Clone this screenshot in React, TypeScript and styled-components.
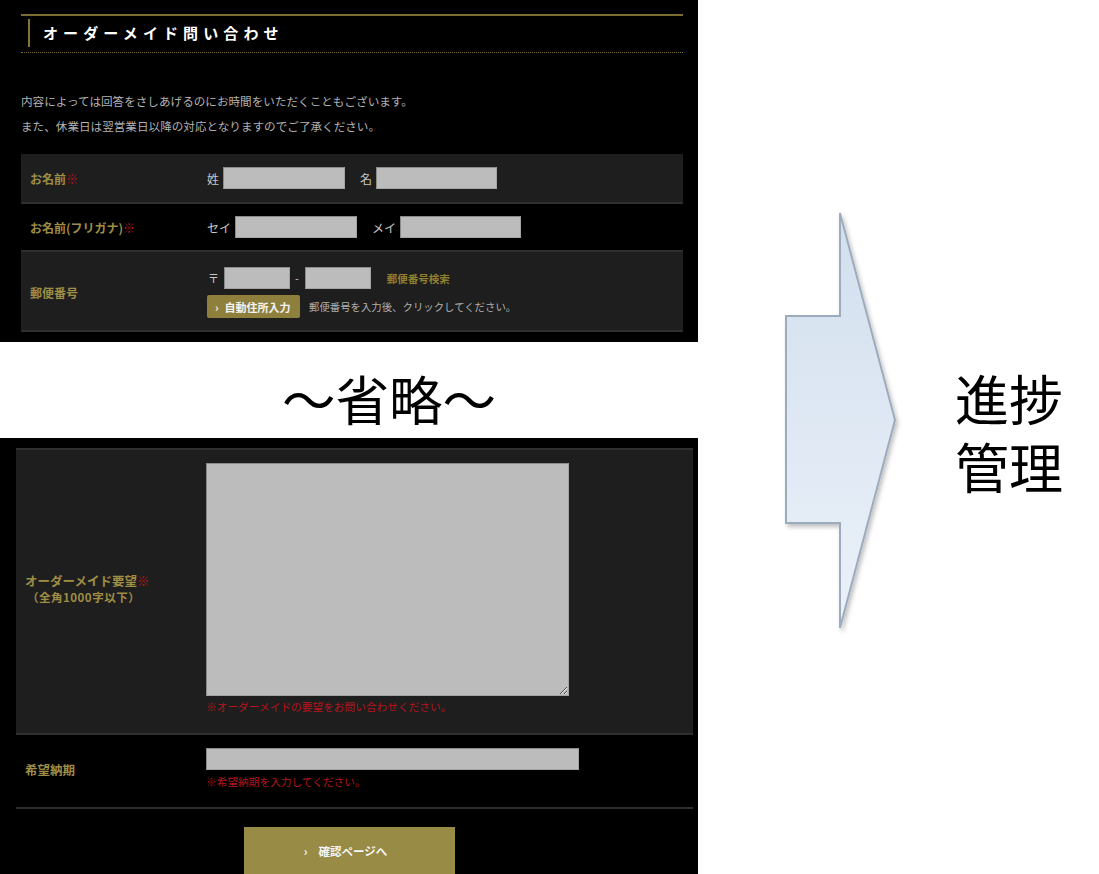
import React from 'react';
import styled, { createGlobalStyle } from 'styled-components';

const GOLD = '#9e8d45';
const LINE_GOLD = '#7c6c30';
const RED = '#b5141d';

const GlobalStyle = createGlobalStyle`
  html, body {
    margin: 0;
    padding: 0;
    background: #ffffff;
  }
  body {
    font-family: "Noto Sans CJK JP", "Noto Sans", sans-serif;
  }
`;

const Slide = styled.div`
  display: flex;
  width: 1099px;
  height: 874px;
  overflow: hidden;
  background: #ffffff;
`;

const LeftColumn = styled.div`
  display: flex;
  flex-direction: column;
  width: 698px;
  flex-shrink: 0;
`;

const Shot = styled.div<{ $h: number; $pad: string }>`
  height: ${p => p.$h}px;
  padding: ${p => p.$pad};
  box-sizing: border-box;
  background: #000000;
  overflow: hidden;
`;

const Heading = styled.div`
  border-top: 2px solid ${LINE_GOLD};
  border-bottom: 1px dotted ${LINE_GOLD};
  padding: 3px 0 5px 7px;
`;

const HeadingTitle = styled.h2`
  margin: 0;
  height: 28px;
  padding-left: 13px;
  border-left: 2px solid #85743a;
  color: #ffffff;
  font-size: 15px;
  font-weight: 700;
  line-height: 28px;
  letter-spacing: 5.1px;
`;

const Intro = styled.div`
  margin: 36px 0 15px;
  color: #b2b2b2;
  font-size: 11.6px;
  line-height: 25px;
`;

const Row = styled.div<{ $shade?: boolean; $labelW: number; $pad: string; $top?: boolean }>`
  display: grid;
  grid-template-columns: ${p => p.$labelW}px 1fr;
  align-items: center;
  padding: ${p => p.$pad};
  background: ${p => (p.$shade ? '#1e1e1e' : 'transparent')};
  border-top: ${p => (p.$top ? '2px solid #2f2f2f' : 'none')};
  border-bottom: 2px solid #2f2f2f;
`;

const Label = styled.div<{ $size?: number }>`
  padding-left: 9px;
  color: ${GOLD};
  font-size: ${p => p.$size ?? 12}px;
  font-weight: 700;
  line-height: 17px;
`;

const SubLabel = styled.div`
  padding-left: 2px;
  font-size: 11.5px;
  letter-spacing: 0.5px;
`;

const Req = styled.span`
  color: ${RED};
`;

const Field = styled.div`
  display: flex;
  flex-direction: column;
  align-items: flex-start;
`;

const FieldLine = styled.div<{ $mt?: number }>`
  display: flex;
  align-items: center;
  margin-top: ${p => p.$mt ?? 0}px;
`;

const Caption = styled.span<{ $size?: number; $ml?: number; $mr?: number }>`
  margin: 0 ${p => p.$mr ?? 4}px 0 ${p => p.$ml ?? 0}px;
  color: #c6c6c6;
  font-size: ${p => p.$size ?? 12}px;
  line-height: 17px;
`;

const TextBox = styled.input<{ $w: number; $mr?: number }>`
  width: ${p => p.$w}px;
  height: 22px;
  margin: 0 ${p => p.$mr ?? 0}px 0 0;
  padding: 0;
  box-sizing: border-box;
  background: #bcbcbc;
  border: 1px solid #a4a4a4;
  border-top-color: #8a8a8a;
  border-left-color: #8a8a8a;
`;

const LinkText = styled.span`
  margin-left: 16px;
  color: #8f8030;
  font-size: 10.5px;
  font-weight: 700;
`;

const AutoButton = styled.button`
  display: flex;
  align-items: center;
  gap: 6px;
  width: 93px;
  height: 23px;
  padding: 0 0 0 8px;
  border: none;
  border-radius: 2px;
  background: #8e7f3d;
  color: #f4f4f4;
  font-family: inherit;
  font-size: 11px;
  font-weight: 700;
`;

const Help = styled.span`
  margin-left: 9px;
  color: #b0b0b0;
  font-size: 10.4px;
`;

const Omitted = styled.div`
  height: 96px;
  padding: 18px 0 0 282px;
  box-sizing: border-box;
  color: #000000;
  font-size: 53.5px;
  line-height: 76px;
`;

const Memo = styled.textarea`
  display: block;
  width: 363px;
  height: 233px;
  margin: 0;
  padding: 0;
  box-sizing: border-box;
  background: #bcbcbc;
  border: 1px solid #a4a4a4;
  border-top-color: #8a8a8a;
  border-left-color: #8a8a8a;
`;

const ErrorText = styled.div<{ $mt: number }>`
  margin-top: ${p => p.$mt}px;
  color: ${RED};
  font-size: 10.7px;
  line-height: 16px;
`;

const SubmitBar = styled.div`
  display: flex;
  justify-content: center;
  padding: 18px 10px 0 0;
`;

const Submit = styled.button`
  display: flex;
  align-items: center;
  justify-content: center;
  gap: 11px;
  width: 211px;
  height: 48px;
  padding: 0 8px 0 0;
  border: none;
  background: #978b46;
  color: #f6f6f6;
  font-family: inherit;
  font-size: 11.5px;
  font-weight: 700;
`;

const RightPane = styled.div`
  display: flex;
  align-items: flex-start;
  padding-top: 205px;
`;

const Arrow = styled.svg`
  margin-left: 82px;
  flex-shrink: 0;
  overflow: visible;
`;

const Progress = styled.div`
  display: flex;
  flex-direction: column;
  margin: 163px 0 0 50px;
`;

const ProgressLine = styled.div`
  height: 68px;
  color: #000000;
  font-family: "Liberation Sans", "Noto Sans CJK JP", sans-serif;
  font-size: 54px;
  line-height: 68px;
`;

export default function App() {
  return (
    <Slide>
      <GlobalStyle />
      <LeftColumn>
        <Shot $h={342} $pad="14px 15px 0 21px">
          <Heading>
            <HeadingTitle>オーダーメイド問い合わせ</HeadingTitle>
          </Heading>
          <Intro>
            内容によっては回答をさしあげるのにお時間をいただくこともございます。
            <br />
            また、休業日は翌営業日以降の対応となりますのでご了承ください。
          </Intro>
          <Row $shade $labelW={186} $pad="13px 0">
            <Label>
              お名前<Req>※</Req>
            </Label>
            <FieldLine>
              <Caption>姓</Caption>
              <TextBox $w={122} $mr={15} />
              <Caption>名</Caption>
              <TextBox $w={121} />
            </FieldLine>
          </Row>
          <Row $labelW={186} $pad="12px 0">
            <Label>
              お名前(フリガナ)<Req>※</Req>
            </Label>
            <FieldLine>
              <Caption>セイ</Caption>
              <TextBox $w={122} $mr={15} />
              <Caption>メイ</Caption>
              <TextBox $w={121} />
            </FieldLine>
          </Row>
          <Row $shade $labelW={186} $pad="15px 0 12px">
            <Label>郵便番号</Label>
            <Field>
              <FieldLine>
                <Caption $size={11} $ml={1} $mr={5}>〒</Caption>
                <TextBox $w={66} />
                <Caption $size={11} $ml={5} $mr={6}>-</Caption>
                <TextBox $w={66} />
                <LinkText>郵便番号検索</LinkText>
              </FieldLine>
              <FieldLine $mt={6}>
                <AutoButton type="button">
                  <span>›</span>
                  <span>自動住所入力</span>
                </AutoButton>
                <Help>郵便番号を入力後、クリックしてください。</Help>
              </FieldLine>
            </Field>
          </Row>
        </Shot>

        <Omitted>～省略～</Omitted>

        <Shot $h={436} $pad="10px 5px 0 16px">
          <Row $shade $top $labelW={190} $pad="13px 0 18px">
            <Label $size={12.5}>
              オーダーメイド要望<Req>※</Req>
              <SubLabel>（全角1000字以下）</SubLabel>
            </Label>
            <Field>
              <Memo />
              <ErrorText $mt={3}>※オーダーメイドの要望をお問い合わせください。</ErrorText>
            </Field>
          </Row>
          <Row $labelW={190} $pad="13px 0 17px">
            <Label $size={12.5}>希望納期</Label>
            <Field>
              <TextBox $w={373} />
              <ErrorText $mt={4}>※希望納期を入力してください。</ErrorText>
            </Field>
          </Row>
          <SubmitBar>
            <Submit type="button">
              <span>›</span>
              <span>確認ページへ</span>
            </Submit>
          </SubmitBar>
        </Shot>
      </LeftColumn>

      <RightPane>
        <Arrow width="125" height="440" viewBox="0 0 125 440">
          <defs>
            <linearGradient id="arrowFill" x1="0" y1="0" x2="0" y2="1">
              <stop offset="0%" stopColor="#d2dfee" />
              <stop offset="100%" stopColor="#ebf1f9" />
            </linearGradient>
            <filter id="arrowShadow" x="-20%" y="-10%" width="150%" height="130%">
              <feDropShadow dx="2" dy="3" stdDeviation="2" floodColor="#000" floodOpacity="0.25" />
            </filter>
          </defs>
          <polygon
            points="60,8 115,215 60,423 60,318 6,318 6,111 60,111"
            fill="url(#arrowFill)"
            stroke="#9cacbd"
            strokeWidth="2"
            strokeLinejoin="miter"
            filter="url(#arrowShadow)"
          />
        </Arrow>
        <Progress>
          <ProgressLine>進捗</ProgressLine>
          <ProgressLine>管理</ProgressLine>
        </Progress>
      </RightPane>
    </Slide>
  );
}
